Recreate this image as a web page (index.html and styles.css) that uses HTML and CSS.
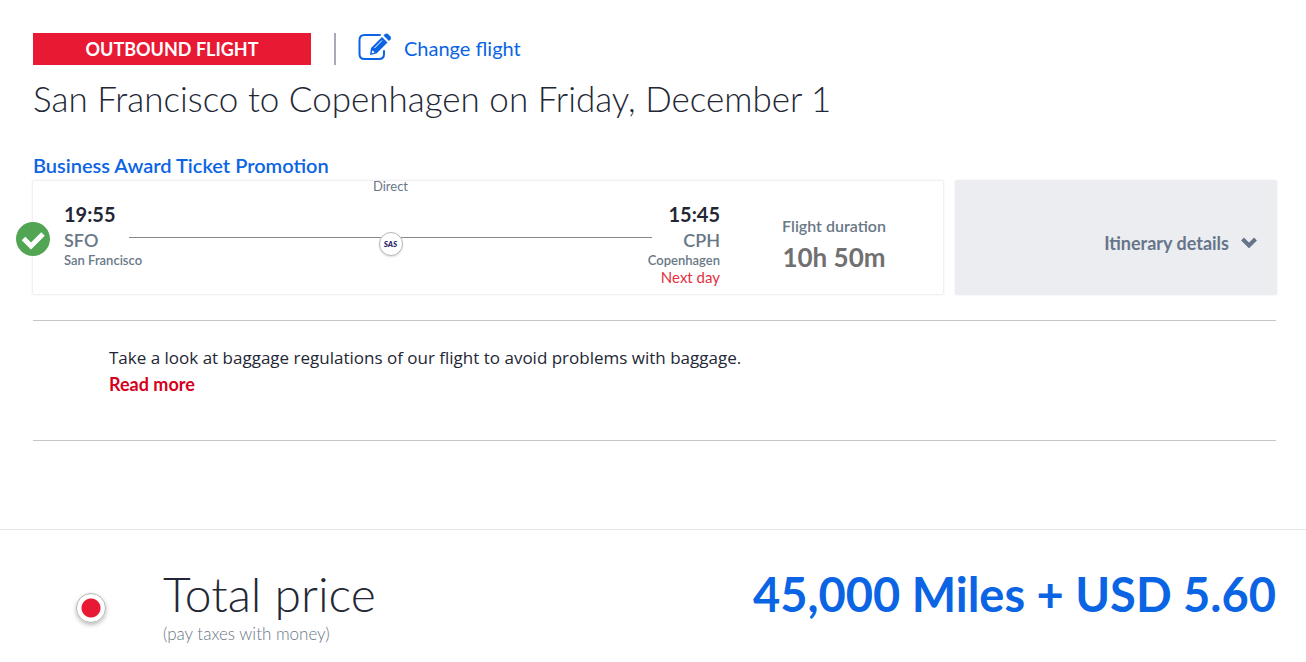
FILE: index.html
```html
<!DOCTYPE html>
<html lang="en">
<head>
<meta charset="utf-8">
<title>Outbound flight</title>
<link rel="stylesheet" href="styles.css">
</head>
<body>
<main class="page">
  <div class="toolbar">
    <span class="badge">OUTBOUND FLIGHT</span>
    <a class="change" href="#">
      <svg class="change-icon" width="34" height="28" viewBox="0 0 34 28" aria-hidden="true">
        <path d="M22 2H6.500Q1.500 2 1.500 7V21Q1.500 26 6.500 26H21Q26 26 26 21V18" fill="none" stroke="currentColor" stroke-width="2" stroke-linecap="round"/>
        <path d="M13 15L24 4L29.500 9.500L18.500 20.500L12 22Z" fill="currentColor"/>
        <path d="M25.500 2.500L27 1Q28.500 0 30 1L32.500 3.500Q33.500 5 32.500 6.500L31 8Z" fill="currentColor"/>
        <path d="M14.500 17.200L16.800 19.500L13.700 20.300Z" fill="#fff"/>
        <path d="M16.500 15L24 7.500" stroke="#fff" stroke-width="1"/>
      </svg>
      <span>Change flight</span>
    </a>
  </div>
  <h1 class="title">San Francisco to Copenhagen on Friday, December 1</h1>
  <h2 class="fare">Business Award Ticket Promotion</h2>
  <div class="flight">
    <section class="card">
      <svg class="check" width="34" height="34" viewBox="0 0 34 34" role="img" aria-label="Selected">
        <circle cx="17" cy="17" r="17" fill="#52a552"/>
        <path d="M7.500 16.500L15 24L27 12" fill="none" stroke="#fff" stroke-width="5"/>
      </svg>
      <div class="stop">
        <strong class="time">19:55</strong>
        <span class="code">SFO</span>
        <span class="city">San Francisco</span>
      </div>
      <div class="route">
        <span class="direct">Direct</span>
        <span class="line"></span>
        <span class="carrier">SAS</span>
      </div>
      <div class="stop arrival">
        <strong class="time">15:45</strong>
        <span class="code">CPH</span>
        <span class="city">Copenhagen</span>
        <span class="next">Next day</span>
      </div>
      <div class="duration">
        <span class="duration-label">Flight duration</span>
        <strong class="duration-value">10h 50m</strong>
      </div>
    </section>
    <button class="details" type="button">
      <span>Itinerary details</span>
      <svg width="16" height="11" viewBox="0 0 16 11" aria-hidden="true"><path d="M1.500 2L8 8.500L14.500 2" fill="none" stroke="currentColor" stroke-width="4"/></svg>
    </button>
  </div>
  <section class="notice">
    <p class="notice-text">Take a look at baggage regulations of our flight to avoid problems with baggage.</p>
    <a class="more" href="#">Read more</a>
  </section>
</main>
<footer class="total">
  <input class="radio" type="radio" id="pay" name="pay" checked>
  <label class="total-label" for="pay">
    <span class="total-title">Total price</span>
    <span class="total-note">(pay taxes with money)</span>
  </label>
  <strong class="price">45,000 Miles + USD 5.60</strong>
</footer>
</body>
</html>
```
FILE: styles.css
```css
* { box-sizing: border-box; }
body {
  margin: 0;
  background: #fff;
  color: #232735;
  font-family: Lato, "Open Sans", sans-serif;
}
a { text-decoration: none; }
.page { padding: 33px 30px 0 33px; }

.toolbar { display: flex; height: 32px; }
.badge {
  width: 278px;
  background: #e81932;
  color: #fff;
  font-size: 18px;
  font-weight: 700;
  line-height: 32px;
  text-align: center;
}
.change {
  display: flex;
  gap: 12px;
  margin-left: 23px;
  padding-left: 22px;
  border-left: 2px solid #a5a9b8;
  color: #0a64e4;
  font-size: 20px;
  line-height: 30px;
}

.title {
  margin: 11px 0 0;
  font-size: 35px;
  font-weight: 300;
  line-height: 44px;
}
.fare {
  margin: 32px 0 0;
  color: #0a64e4;
  font-size: 20px;
  font-weight: 600;
  line-height: 26px;
}

.flight {
  display: grid;
  grid-template-columns: 912fr 322fr;
  gap: 11px;
  margin: 2px -1px 0;
}
.card {
  position: relative;
  display: flex;
  height: 115px;
  padding: 0 55px 0 31px;
  border: 1px solid #f0f0f2;
  border-radius: 2px;
  box-shadow: 0 0 2px #ececee;
}
.check {
  position: absolute;
  left: -17px;
  top: 41px;
}
.stop {
  display: flex;
  flex-direction: column;
  width: 65px;
  padding-top: 20px;
  white-space: nowrap;
  color: #697886;
}
.arrival { width: 68px; align-items: flex-end; }
.time { color: #232735; font-size: 20px; line-height: 26px; }
.code { font-size: 18px; font-weight: 600; line-height: 26px; }
.city { font-size: 13px; font-weight: 600; line-height: 15px; }
.next { color: #e3303f; font-size: 15px; line-height: 18px; }
.route {
  display: flex;
  flex-direction: column;
  align-items: center;
  flex: 1;
}
.direct { color: #697886; font-size: 13px; line-height: 11px; }
.line { width: 100%; margin-top: 45px; border-top: 1px solid #83878b; }
.carrier {
  width: 24px;
  height: 24px;
  margin-top: -6px;
  border: 1px solid #b9b9bd;
  border-radius: 50%;
  background: #fff;
  box-shadow: 0 1px 2px #ddd;
  color: #1d2366;
  font-size: 8px;
  font-style: italic;
  font-weight: 900;
  line-height: 23px;
  text-align: center;
}
.duration {
  display: flex;
  flex-direction: column;
  align-items: center;
  width: 108px;
  margin-left: 60px;
  padding-top: 33px;
  white-space: nowrap;
}
.duration-label { color: #697886; font-size: 16px; font-weight: 600; line-height: 24px; }
.duration-value { color: #707070; font-size: 26px; line-height: 38px; }
.details {
  display: flex;
  align-items: center;
  justify-content: flex-end;
  gap: 12px;
  padding: 10px 20px 0;
  border: 0;
  border-radius: 2px;
  background: #ebedf1;
  color: #66758a;
  font: 700 18px Lato, sans-serif;
  box-shadow: 0 0 2px #e2e4e8;
}

.notice {
  height: 121px;
  margin-top: 25px;
  padding: 23px 76px;
  border-top: 1px solid #c6c6c8;
  border-bottom: 1px solid #c6c6c8;
  font-size: 18px;
  line-height: 27px;
}
.notice-text { margin: 0; font-family: "Open Sans", sans-serif; font-size: 17px; }
.more { color: #d5001c; font-weight: 700; }

.total {
  display: flex;
  align-items: flex-start;
  margin-top: 88px;
  padding: 35px 30px 0 76px;
  border-top: 1px solid #e6e6e8;
}
.radio {
  appearance: none;
  width: 30px;
  height: 30px;
  margin: 28px 57px 0 0;
  border: 1px solid #b4b4b4;
  border-radius: 50%;
  background: radial-gradient(circle, #e81932 9px, #fff 10px);
  box-shadow: 0 2px 4px #bbb;
}
.total-label { display: flex; flex-direction: column; }
.total-title { font-size: 48px; font-weight: 300; line-height: 58px; }
.total-note { color: #697886; font-size: 17px; font-weight: 300; line-height: 22px; }
.price {
  margin-left: auto;
  color: #0a64e4;
  font-size: 47px;
  line-height: 58px;
}
```
